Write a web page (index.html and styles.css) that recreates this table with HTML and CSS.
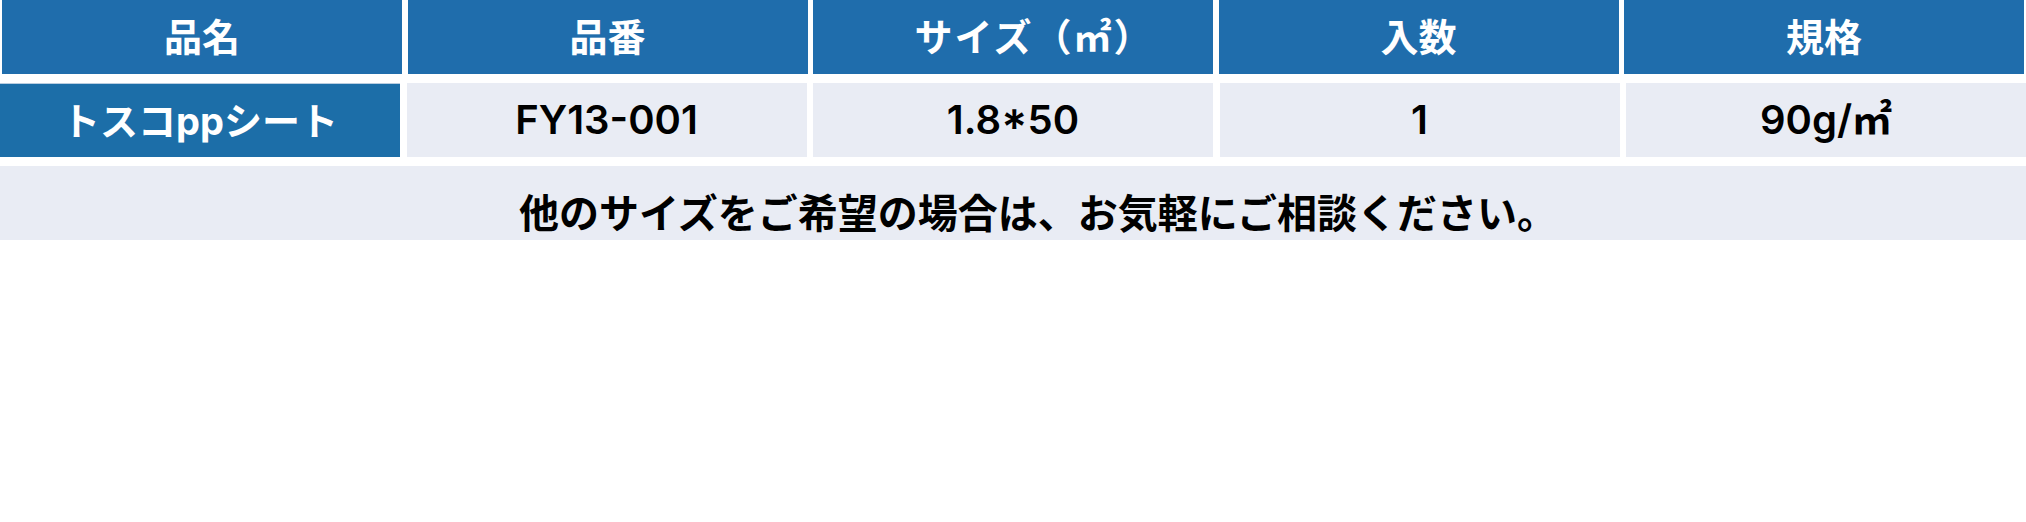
FILE: index.html
```html
<!DOCTYPE html>
<html lang="ja">
<head>
<meta charset="utf-8">
<link rel="stylesheet" href="styles.css">
</head>
<body>
<div class="spec">
  <div class="row head">
    <div class="cell">品名</div>
    <div class="cell">品番</div>
    <div class="cell size">サイズ（㎡）</div>
    <div class="cell">入数</div>
    <div class="cell">規格</div>
  </div>
  <div class="row data">
    <div class="cell name">トスコppシート</div>
    <div class="cell">FY13-001</div>
    <div class="cell">1.8*50</div>
    <div class="cell">1</div>
    <div class="cell">90g/㎡</div>
  </div>
  <div class="note">他のサイズをご希望の場合は、お気軽にご相談ください。</div>
</div>
</body>
</html>
```
FILE: styles.css
```css
html, body {
  margin: 0;
  padding: 0;
  background: #ffffff;
}
body {
  font-family: "Noto Sans CJK JP", "Noto Sans", sans-serif;
}
.spec {
  display: flex;
  flex-direction: column;
  gap: 9px;
  width: 2026px;
}
.row {
  display: grid;
  grid-template-columns: repeat(5, 400px);
  height: 74px;
}
.head {
  column-gap: 5.5px;
  padding-left: 2px;
}
.data {
  column-gap: 6.5px;
}
.cell {
  display: flex;
  align-items: center;
  justify-content: center;
  font-size: 38px;
  line-height: 1;
}
.head .cell {
  background: #1f6dac;
  color: #ffffff;
  font-weight: 700;
  padding-bottom: 4px;
  box-sizing: border-box;
}
.head .size {
  letter-spacing: 2px;
  padding-left: 42px;
}
.data .cell {
  background: #e9ecf4;
  color: #000000;
  font-family: Inter, "Noto Sans CJK JP", sans-serif;
  font-size: 40px;
  font-weight: 600;
}
.data .name {
  background: #1c6ea8;
  color: #ffffff;
  border-top: 1px solid #b9cde0;
  box-sizing: border-box;
  font-size: 38px;
  font-weight: 700;
}
.note {
  height: 74px;
  background: #e9ecf4;
  color: #000000;
  font-size: 40px;
  font-weight: 700;
  line-height: 1;
  display: flex;
  align-items: center;
  justify-content: center;
  padding-top: 16px;
  padding-left: 50px;
  box-sizing: border-box;
}
```
